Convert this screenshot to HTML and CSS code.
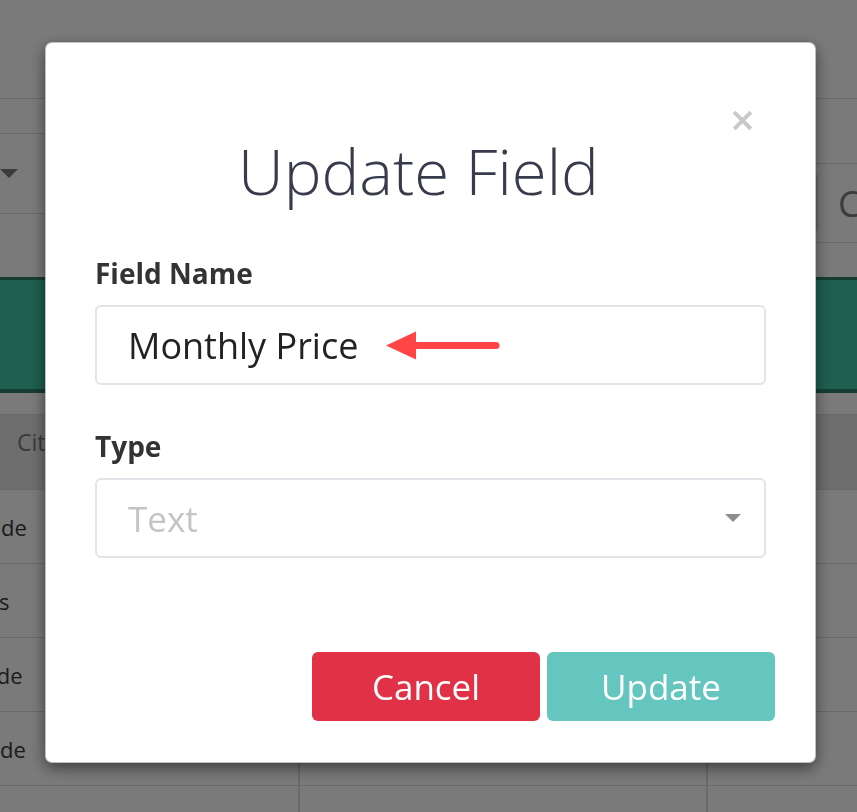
FILE: index.html
```html
<!DOCTYPE html>
<html lang="en">
<head>
<meta charset="utf-8">
<title>Update Field</title>
<link rel="stylesheet" href="styles.css">
</head>
<body>
<div class="page">
  <div class="topbar"></div>
  <div class="toolbar">
    <div class="filters">
      <div class="filter-row"></div>
      <div class="select-row"><span class="caret-dark"></span></div>
    </div>
    <div class="search">
      <div class="search-box"><span class="sep"></span><span class="search-text">Co</span></div>
    </div>
  </div>
  <div class="banner"></div>
  <div class="spacer"></div>
  <div class="table">
    <div class="trow thead">
      <div class="cell c1 th">City</div><div class="cell c2"></div><div class="cell c3"></div>
    </div>
    <div class="trow"><div class="cell c1">Adelaide</div><div class="cell c2"></div><div class="cell c3"></div></div>
    <div class="trow"><div class="cell c1">Athens</div><div class="cell c2"></div><div class="cell c3"></div></div>
    <div class="trow"><div class="cell c1">Eastside</div><div class="cell c2"></div><div class="cell c3"></div></div>
    <div class="trow"><div class="cell c1">Parkside</div><div class="cell c2"></div><div class="cell c3"></div></div>
    <div class="trow trow-last"><div class="cell c1"></div><div class="cell c2"></div><div class="cell c3"></div></div>
  </div>
</div>

<div class="overlay">
  <div class="modal">
    <svg class="close" viewBox="0 0 19 19" width="19" height="19" aria-label="Close">
      <path d="M2.5 2.5 L16.5 16.5 M16.5 2.5 L2.5 16.5" stroke="#c9c9c9" stroke-width="4" stroke-linecap="square" fill="none"/>
    </svg>
    <h1 class="title">Update Field</h1>
    <div class="group">
      <label class="label">Field Name</label>
      <div class="input">
        <span class="value">Monthly Price</span>
        <svg class="arrow" viewBox="0 0 116 31" width="116" height="31">
          <path d="M1 15.5 L31 1.5 L31 29.5 Z" fill="#ff4545"/>
          <path d="M28 15.5 L111 15.5" stroke="#ff4545" stroke-width="7" stroke-linecap="round"/>
        </svg>
      </div>
    </div>
    <div class="group group-type">
      <label class="label">Type</label>
      <div class="input select">
        <span class="placeholder">Text</span>
        <span class="caret"></span>
      </div>
    </div>
    <div class="footer">
      <button class="btn btn-cancel">Cancel</button>
      <button class="btn btn-update">Update</button>
    </div>
  </div>
</div>
</body>
</html>
```
FILE: styles.css
```css
* { box-sizing: border-box; }
html, body { margin: 0; padding: 0; }
body {
  width: 857px;
  height: 812px;
  overflow: hidden;
  background: #ffffff;
  font-family: "Open Sans", "Liberation Sans", sans-serif;
}

/* background page */
.page { width: 857px; height: 812px; overflow: hidden; }
.topbar { height: 99px; border-bottom: 1px solid #dcdcdc; }
.toolbar { display: flex; height: 178px; }
.filters { flex: 1; }
.filter-row { height: 35px; border-bottom: 1px solid #dcdcdc; }
.select-row {
  height: 80px;
  border-bottom: 1px solid #dcdcdc;
  display: flex;
  align-items: center;
}
.caret-dark {
  width: 0; height: 0;
  border-left: 9px solid transparent;
  border-right: 9px solid transparent;
  border-top: 9px solid #7c7c7c;
}
.search { width: 41px; padding-top: 64px; overflow: hidden; }
.search-box {
  height: 80px;
  border-top: 1px solid #dcdcdc;
  border-bottom: 1px solid #dcdcdc;
  display: flex;
  align-items: center;
  white-space: nowrap;
}
.sep { flex: none; width: 2px; height: 56px; background: #dcdcdc; }
.search-text { margin-left: 20px; font-size: 36px; color: #7e7e7e; }
.banner {
  height: 116px;
  background: #41c6a5;
  border-top: 3px solid #2e7f6a;
  border-bottom: 4px solid #2e7f6a;
}
.spacer { height: 22px; border-bottom: 1px solid #dcdcdc; }
.table { margin-left: -80px; width: 937px; }
.trow {
  display: grid;
  grid-template-columns: 380px 408px 1fr;
  height: 74px;
  border-bottom: 1px solid #dcdcdc;
}
.trow-last { height: 40px; border-bottom: none; }
.thead { height: 75px; background: #e6e6e6; }
.cell {
  display: flex;
  align-items: center;
  padding-left: 18px;
  font-size: 22px;
  color: #3a3a3a;
  white-space: nowrap;
}
.c1, .c2 { border-right: 2px solid #dcdcdc; }
.th { padding-left: 97px; padding-bottom: 20px; color: #7a7a7a; font-size: 23px; }

/* overlay + modal */
.overlay {
  position: fixed;
  inset: 0;
  background: rgba(0, 0, 0, 0.52);
}
.modal {
  position: relative;
  margin: 42px 0 0 45px;
  width: 771px;
  height: 721px;
  background: #ffffff;
  border: 1px solid rgba(0, 0, 0, 0.25);
  border-radius: 7px;
  box-shadow: 0 5px 15px rgba(0, 0, 0, 0.5);
  padding: 93px 49px 0 49px;
}
.close { position: absolute; top: 68px; right: 63px; }
.title {
  margin: 0;
  padding-right: 24px;
  font-size: 63.5px;
  font-weight: 300;
  line-height: 69px;
  text-align: center;
  color: #383b4c;
}
.group { margin-top: 49px; }
.group-type { margin-top: 42px; }
.label {
  display: block;
  margin-bottom: 12px;
  font-size: 28px;
  font-weight: 700;
  line-height: 39px;
  color: #333333;
}
.input {
  height: 80px;
  border: 2px solid #e3e3e9;
  border-radius: 6px;
  padding: 0 23px 0 31px;
  display: flex;
  align-items: center;
  font-size: 36px;
  color: #222222;
}
.arrow { margin-left: 27px; flex: none; }
.select { justify-content: space-between; }
.placeholder { color: #c4c4c4; font-size: 35px; }
.caret {
  width: 0; height: 0;
  border-left: 8.5px solid transparent;
  border-right: 8.5px solid transparent;
  border-top: 8px solid #8e8e8e;
}
.footer {
  display: flex;
  justify-content: flex-end;
  gap: 7px;
  margin-top: 94px;
  margin-right: -9px;
}
.btn {
  width: 228px;
  height: 69px;
  border: none;
  border-radius: 6px;
  font-family: "Open Sans", "Liberation Sans", sans-serif;
  font-size: 35px;
  color: #ffffff;
  padding: 0;
}
.btn-cancel { background: #e03146; }
.btn-update { background: #64c6be; }
```
